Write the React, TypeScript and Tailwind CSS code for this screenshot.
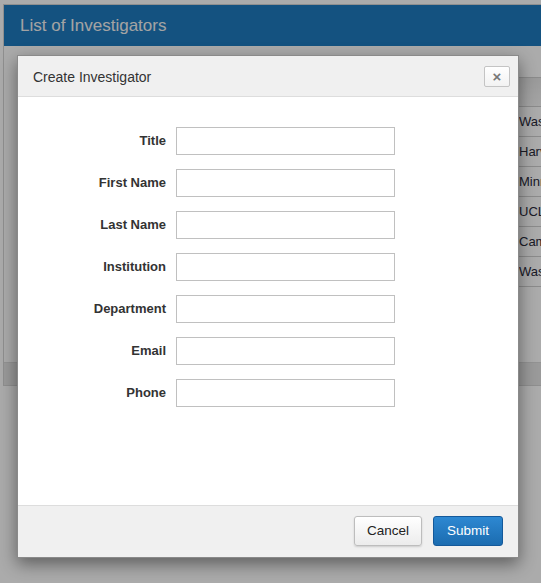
import React from "react";

const fields = ["Title", "First Name", "Last Name", "Institution", "Department", "Email", "Phone"];
const rows = ["Washington University", "Harvard", "Minnesota", "UCLA", "Cambridge", "Washington"];

const App = () => {
	return (
		<div className="relative w-[541px] h-[583px] overflow-hidden bg-white font-['Liberation_Sans',Arial,sans-serif] text-[#333]">
			{/* page behind the dialog */}
			<div className="pt-[4px] pl-[3px]">
				<div className="w-[560px] h-[382px] flex flex-col border border-[#d6d6d6] bg-white">
					<div className="h-[41px] shrink-0 flex items-center pl-[16px] bg-[#1f7bbf]">
						<h1 className="text-[17px] text-[#f4f4f4]">List of Investigators</h1>
					</div>
					<div className="flex-1 pt-[31px] pl-[14px]">
						<div className="grid grid-cols-[497px_1fr] border-t border-[#cfcfcf]">
							<div className="h-[29px] bg-gradient-to-b from-[#e6e6e6] to-[#f6f6f6] border-b border-[#cfcfcf]" />
							<div className="h-[29px] bg-gradient-to-b from-[#e6e6e6] to-[#f6f6f6] border-b border-[#cfcfcf]" />
							{rows.map((r) => (
								<React.Fragment key={r}>
									<div className="h-[30px] border-b border-[#cfcfcf]" />
									<div className="h-[30px] border-b border-[#cfcfcf] flex items-center pl-[4px] text-[13px] whitespace-nowrap text-[#2a2a3a]">
										{r}
									</div>
								</React.Fragment>
							))}
						</div>
					</div>
					<div className="h-[23px] shrink-0 bg-[#e6e6e6] border-t border-[#dcdcdc]" />
				</div>
			</div>

			{/* backdrop */}
			<div className="absolute inset-0 bg-black/[0.33]" />

			{/* dialog */}
			<div className="absolute left-[17px] top-[55px] w-[502px] h-[503px] flex flex-col bg-white border border-[#8a8a8a] shadow-[0_6px_16px_rgba(0,0,0,0.45)]">
				<div className="h-[41px] shrink-0 flex items-center justify-between pl-[15px] pr-[8px] bg-[#f0f0f0] border-b border-[#dddddd]">
					<h2 className="text-[14px] text-[#333] pt-[2px]">Create Investigator</h2>
					<button className="w-[26px] h-[21px] flex items-center justify-center rounded-[2px] border border-[#c4c4c4] bg-gradient-to-b from-white to-[#f2f2f2] text-[#777] text-[15px] font-bold leading-none">
						×
					</button>
				</div>
				<div className="flex-1 pt-[30px]">
					<div className="grid grid-cols-[148px_219px] gap-x-[10px] gap-y-[14px]">
						{fields.map((f) => (
							<React.Fragment key={f}>
								<label className="h-[28px] flex items-center justify-end text-[13px] font-bold text-[#333]">{f}</label>
								<input type="text" className="h-[28px] w-[219px] border border-[#c0c0c0] bg-white outline-none px-[6px] text-[13px]" />
							</React.Fragment>
						))}
					</div>
				</div>
				<div className="h-[52px] shrink-0 flex justify-end items-start gap-[11px] pt-[10px] pr-[15px] bg-[#f0f0f0] border-t border-[#dddddd]">
					<button className="w-[68px] h-[30px] rounded-[3px] border border-[#bdbdbd] bg-gradient-to-b from-white to-[#ececec] shadow-[0_1px_2px_rgba(0,0,0,0.15)] text-[13.5px] text-[#222]">
						Cancel
					</button>
					<button className="w-[70px] h-[30px] rounded-[3px] border border-[#14599a] bg-gradient-to-b from-[#2d88d2] to-[#1b6cb0] text-[13.5px] text-white">
						Submit
					</button>
				</div>
			</div>
		</div>
	);
};

export default App;
